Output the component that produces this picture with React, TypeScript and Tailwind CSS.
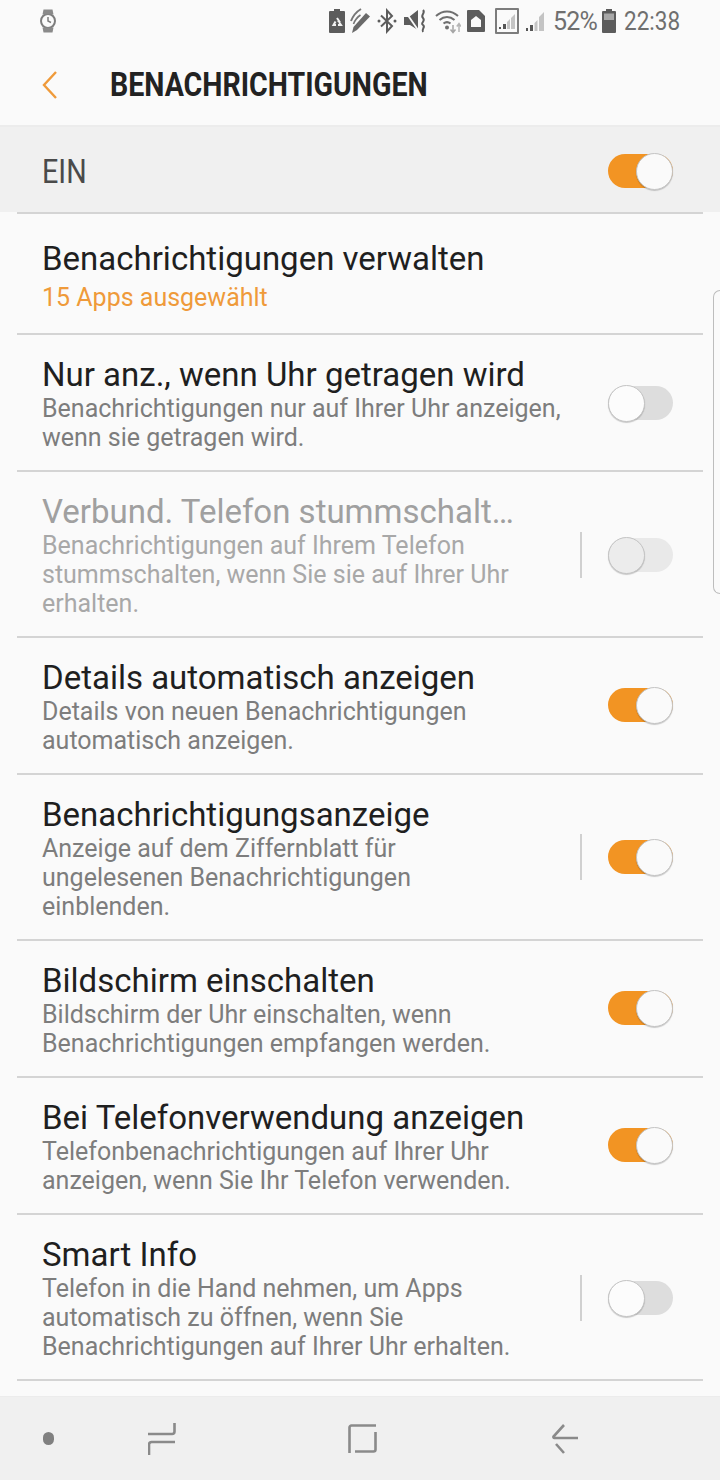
import React from 'react';

interface RowProps {
    title: string;
    lines: string[];
    on?: boolean;
    divider?: boolean;
    disabled?: boolean;
}

function Toggle({ on, disabled }: { on?: boolean; disabled?: boolean }) {
    return (
        <div className="relative w-[65px] h-[36px] shrink-0">
            <div className={`absolute left-0 right-0 top-[1px] h-[34px] rounded-full ${on ? 'bg-[#f29423]' : disabled ? 'bg-[#e9e9e9]' : 'bg-[#dddddd]'}`} />
            <div className={`absolute top-0 w-[37px] h-[37px] rounded-full border border-[#c4c4c4] shadow-[0_1px_1px_rgba(0,0,0,0.2)] ${on ? 'right-0 bg-[#fafafa]' : disabled ? 'left-0 bg-[#ececec]' : 'left-0 bg-[#fcfcfc]'}`} />
        </div>
    );
}

function Row({ title, lines, on, divider, disabled }: RowProps) {
    return (
        <div className="mx-[17px] border-b-2 border-[#d4d4d4] flex items-center pl-[25px] pr-[30px] pt-[21px] pb-[18px]">
            <div className="flex-1 min-w-0">
                <div className={`text-[33px] leading-[38px] whitespace-nowrap ${disabled ? 'text-[#a0a0a0]' : 'text-[#1f1f1f]'}`}>{title}</div>
                {lines.map((l) => (
                    <div key={l} className={`text-[25px] leading-[29px] ${disabled ? 'text-[#a8a8a8]' : 'text-[#7d7d7d]'}`}>{l}</div>
                ))}
            </div>
            {divider && <div className={`w-[2px] h-[46px] bg-[#d0d0d0] mr-[26px] ${on ? '-mt-[4px]' : '-mt-[2px]'}`} />}
            <div className={on ? '-mt-[4px]' : '-mt-[2px]'}>
                <Toggle on={on} disabled={disabled} />
            </div>
        </div>
    );
}

function StatusIcons() {
    return (
        <div className="flex items-center text-[#6f6f6f] -mt-[2px]">
            {/* battery saver */}
            <svg width="18" height="24" viewBox="0 0 18 24">
                <path d="M6 0h6v2h4a1 1 0 0 1 1 1v20a1 1 0 0 1-1 1H2a1 1 0 0 1-1-1V3a1 1 0 0 1 1-1h4z" fill="#5c5c5c" />
                <path d="M9 9l2 3h-1.500M7.500 12.500L5.500 16h2.500M11 13l2 3h-3" stroke="#f2f2f2" strokeWidth="2" fill="none" />
            </svg>
            {/* s-pen */}
            <svg width="22" height="26" viewBox="0 0 22 26" className="ml-[4px]" fill="none">
                <path d="M2 25l1.500-6L16 5l4 3.500L7 22z" fill="#6a6a6a" />
                <path d="M1 13C3 8 6 4 11 1" stroke="#777" strokeWidth="2" />
                <path d="M3.500 16C5 12 7.500 9 10.500 7" stroke="#777" strokeWidth="1.600" />
            </svg>
            {/* bluetooth */}
            <svg width="20" height="26" viewBox="0 0 20 26" className="ml-[5px]" fill="none" stroke="#5c5c5c" strokeWidth="2">
                <path d="M4 7.500l11 10.500-5 5.500V2.500L15 8 4 18.500" />
                <circle cx="2" cy="13" r="1.500" fill="#5c5c5c" stroke="none" />
                <circle cx="18" cy="13" r="1.500" fill="#5c5c5c" stroke="none" />
            </svg>
            {/* mute / vibrate */}
            <svg width="23" height="24" viewBox="0 0 23 24" className="ml-[7px]" fill="none">
                <path d="M0 8h5L14 1v20L6 16H0z" fill="#5c5c5c" />
                <path d="M1 2l13 19" stroke="#fafafa" strokeWidth="1.800" />
                <path d="M19 1c3 3-3 5 0 8s-3 5 0 7 -2 4 0 7" stroke="#5c5c5c" strokeWidth="2" />
            </svg>
            {/* wifi */}
            <svg width="26" height="26" viewBox="0 0 26 26" className="ml-[8px]" fill="none" stroke="#6f6f6f" strokeWidth="2">
                <path d="M1 8c6.500-6 15.500-6 22 0" />
                <path d="M4.500 12c4.500-4 10.500-4 15 0" />
                <path d="M8.500 15.500c2.500-2 4.500-2 7 0" />
                <circle cx="12" cy="19.500" r="2" fill="#6f6f6f" stroke="none" />
                <path d="M18 17v7M15.500 21.500l2.500 3 2.500-3" stroke="#a5a5a5" strokeWidth="1.500" />
                <path d="M24 24v-8M21.800 18.500l2.200-3 2 3" stroke="#b5b5b5" strokeWidth="1.500" />
            </svg>
            {/* sim */}
            <svg width="20" height="24" viewBox="0 0 20 24" className="ml-[5px]">
                <path d="M1 2a1 1 0 0 1 1-1h11l6 6v15a1 1 0 0 1-1 1H2a1 1 0 0 1-1-1z" fill="#5c5c5c" />
                <path d="M5 18v-7l5-4 5 4v7z" fill="#fafafa" />
            </svg>
            {/* signal, boxed */}
            <div className="w-[24px] h-[26px] ml-[9px] border-2 border-[#7c7c7c] rounded-[1px] flex items-end justify-end">
                <svg width="20" height="22" viewBox="0 0 20 22">
                    <path d="M2 19h2v-2H2zM6 19h3v-5H6z" fill="#555" />
                    <path d="M10 19h3V9l-3 3zM14 19h4V4l-4 4z" fill="#c4c4c4" />
                </svg>
            </div>
            {/* signal */}
            <svg width="20" height="24" viewBox="0 0 20 24" className="ml-[6px]">
                <path d="M1 22h2v-3H1zM5 22h3v-6H5z" fill="#555" />
                <path d="M9.500 22h3V11l-3 3zM14 22h5V3l-5 5z" fill="#c4c4c4" />
            </svg>
            <span className="text-[25px] leading-none ml-[8px] w-[43px] whitespace-nowrap tracking-[-0.8px] text-[#6f6f6f]">52%</span>
            <svg width="14" height="24" viewBox="0 0 14 24" className="ml-[6px]">
                <path d="M4 0h6v2h3a1 1 0 0 1 1 1v20a1 1 0 0 1-1 1H1a1 1 0 0 1-1-1V3a1 1 0 0 1 1-1h3z" fill="#5c5c5c" />
                <path d="M2 4.500h10V11H2z" fill="#a8a8a8" />
            </svg>
            <span className="text-[25px] leading-none ml-[8px] w-[56px] whitespace-nowrap scale-x-[0.9] origin-left text-[#6f6f6f]">22:38</span>
        </div>
    );
}

export default function App() {
    return (
        <div className="relative w-[720px] h-[1480px] overflow-hidden bg-[#fafafa] flex flex-col font-['Roboto',sans-serif]">
            {/* Status bar */}
            <div className="h-[44px] shrink-0 flex items-center justify-between pl-[38px] pr-[40px]">
                <svg width="20" height="24" viewBox="0 0 20 24" fill="none" stroke="#7d7d7d" strokeWidth="2" className="-mt-[2px]">
                    <circle cx="10" cy="12" r="7" />
                    <path d="M4.500 5.500l1-5h9l1 5zM4.500 18.500l1 5h9l1-5z" fill="#8a8a8a" stroke="none" />
                    <path d="M10 8v4l3 1.500" strokeWidth="1.500" />
                </svg>
                <StatusIcons />
            </div>

            {/* Header */}
            <div className="h-[83px] shrink-0 flex items-center border-b-[2px] border-[#ececec]">
                <svg width="18" height="30" viewBox="0 0 18 30" fill="none" stroke="#ef9a3a" strokeWidth="2.400" className="ml-[41px]">
                    <path d="M15 2L3 15l12 13" />
                </svg>
                <h1 className="ml-[51px] text-[33px] font-bold text-[#222222] leading-none whitespace-nowrap scale-x-[0.865] origin-left">BENACHRICHTIGUNGEN</h1>
            </div>

            {/* Master switch */}
            <div className="h-[85px] shrink-0 bg-[#f0f0f0] flex items-center justify-between pl-[42px] pr-[47px]">
                <span className="mt-[5px] text-[33px] text-[#4a4a4a] scale-x-[0.87] origin-left">EIN</span>
                <div className="mt-[2px]">
                    <Toggle on />
                </div>
            </div>

            <div className="flex-1 min-h-0">
                <div className="mx-[17px] border-y-2 border-[#d4d4d4] pl-[25px] pt-[26px] pb-[15px]">
                    <div className="text-[33px] leading-[38px] text-[#1f1f1f]">Benachrichtigungen verwalten</div>
                    <div className="text-[25px] leading-[40px] text-[#ef9a3a]">15 Apps ausgewählt</div>
                </div>
                <Row title="Nur anz., wenn Uhr getragen wird" lines={['Benachrichtigungen nur auf Ihrer Uhr anzeigen,', 'wenn sie getragen wird.']} />
                <Row title="Verbund. Telefon stummschalt…" lines={['Benachrichtigungen auf Ihrem Telefon', 'stummschalten, wenn Sie sie auf Ihrer Uhr', 'erhalten.']} divider disabled />
                <Row title="Details automatisch anzeigen" lines={['Details von neuen Benachrichtigungen', 'automatisch anzeigen.']} on />
                <Row title="Benachrichtigungsanzeige" lines={['Anzeige auf dem Ziffernblatt für', 'ungelesenen Benachrichtigungen', 'einblenden.']} on divider />
                <Row title="Bildschirm einschalten" lines={['Bildschirm der Uhr einschalten, wenn', 'Benachrichtigungen empfangen werden.']} on />
                <Row title="Bei Telefonverwendung anzeigen" lines={['Telefonbenachrichtigungen auf Ihrer Uhr', 'anzeigen, wenn Sie Ihr Telefon verwenden.']} on />
                <Row title="Smart Info" lines={['Telefon in die Hand nehmen, um Apps', 'automatisch zu öffnen, wenn Sie', 'Benachrichtigungen auf Ihrer Uhr erhalten.']} divider />
            </div>

            {/* Nav bar */}
            <div className="h-[84px] shrink-0 bg-[#f0f0f0] border-t border-[#ececec] flex items-center">
                <div className="ml-[43px] w-[11px] h-[13px] rounded-full bg-[#808080]" />
                <svg width="28" height="32" viewBox="0 0 28 32" fill="none" stroke="#8a8a8a" strokeWidth="2.600" className="ml-[94px]">
                    <path d="M26.500 0v8.500a2.500 2.500 0 0 1-2.500 2.500H0M27 19H3.500a2.500 2.500 0 0 0-2.500 2.500V32" />
                </svg>
                <svg width="29" height="29" viewBox="0 0 29 29" fill="none" stroke="#8a8a8a" strokeWidth="2.600" className="ml-[172px]">
                    <path d="M1.500 29V3.500a2 2 0 0 1 2-2H28M27.500 8v17.500a2 2 0 0 1-2 2H7" />
                </svg>
                <svg width="28" height="30" viewBox="0 0 28 30" fill="none" stroke="#8a8a8a" strokeWidth="2.600" className="ml-[174px]">
                    <path d="M13 1L2.500 12.500a1 1 0 0 0 1 1.500H27M5 20l8 9" />
                </svg>
            </div>

            {/* Edge panel handle */}
            <div className="absolute right-0 top-[290px] w-[7px] h-[304px] border-l border-y border-[#bdbdbd] rounded-l-[8px]" />
        </div>
    );
}
